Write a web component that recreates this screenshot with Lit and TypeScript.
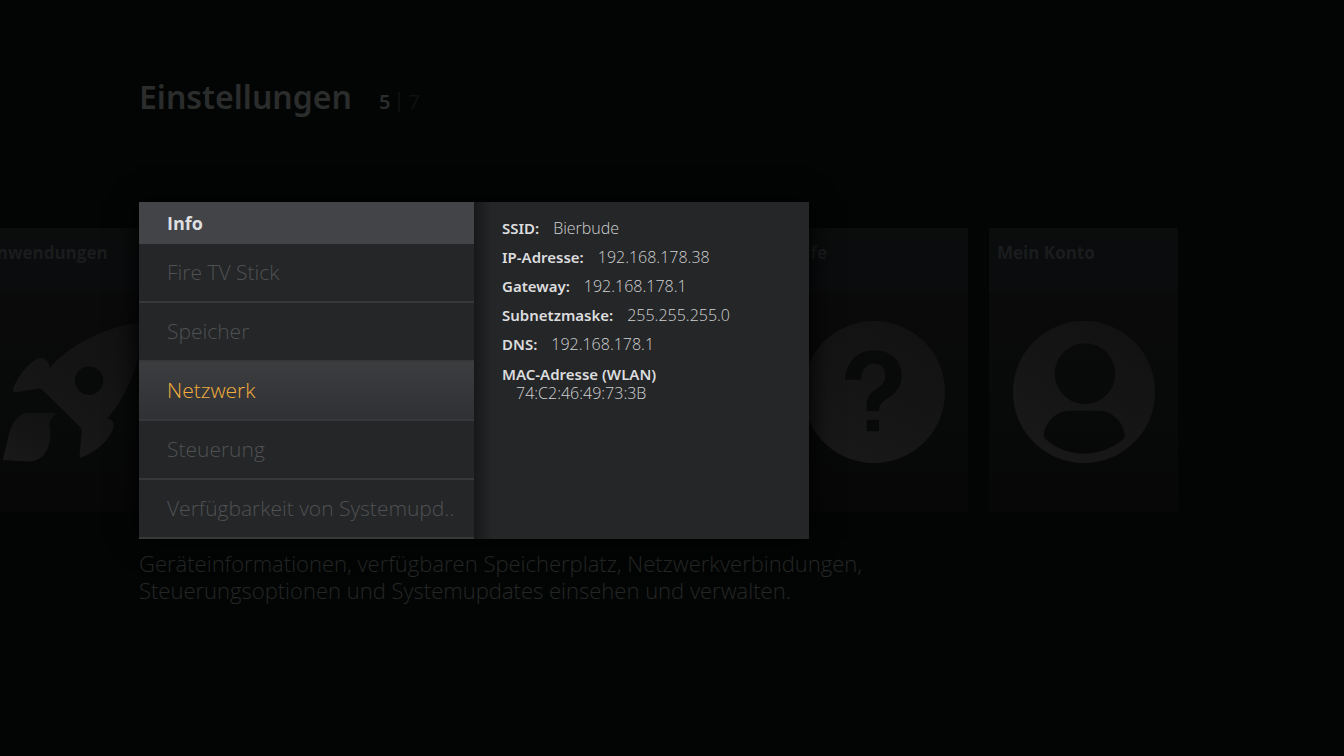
import { LitElement, html, css, svg } from "lit";
import { customElement, property, state } from "lit/decorators.js";
import { classMap } from "lit/directives/class-map.js";

const icons = {
  rocket: svg`
    <path fill-rule="evenodd" d="M146 142C196 80 304 18 424 4C424 102 388 214 318 294C334 292 342 306 336 324C322 360 286 392 242 409C236 411 235 408 236 402L242 330C242 322 238 318 234 314L128 210C122 204 118 202 110 203L48 213C36 214 34 208 38 198C52 166 80 128 108 114C130 104 144 120 146 142ZM264 136a43 43 0 1 0 .1 0Z"/>
    <path d="M5 418L24 340C36 292 58 274 92 275H156C166 275 164 280 156 288C146 298 144 306 146 318C154 360 138 420 88 421C58 422 40 418 5 418Z"/>`,
  help: svg`
    <path fill-rule="evenodd" d="M213 0a213 213 0 1 0 .1 0ZM126 176C130 122 164 88 212 88C264 88 296 118 296 164C296 196 280 216 254 232C236 244 228 252 228 270H191V250C191 226 204 214 224 200C240 189 247 180 247 164C247 142 234 128 212 128C190 128 176 146 175 176ZM191 296H228V331H191Z"/>`,
  account: svg`
    <path fill-rule="evenodd" d="M213 0a213 213 0 1 0 .1 0ZM216 67a91 91 0 1 1-.1 0ZM92 342C98 300 130 269 172 269H256C298 269 330 300 336 342C336 350 332 354 326 358C260 412 166 412 102 358C96 354 92 350 92 342Z"/>`,
};

@customElement("settings-tile")
class SettingsTile extends LitElement {
  @property() label = "";
  @property() icon: keyof typeof icons = "help";

  static styles = css`
    :host { display: block; flex: none; width: 189px; }
    .tile {
      display: flex; flex-direction: column; align-items: center;
      box-sizing: border-box; width: 100%; height: 284px;
      background: linear-gradient(#0b0c0c, #0a0c0e 62px, #0a0a0a 64px, #080909 180px, #070707);
      color: #1a1c1d; text-decoration: none;
    }
    .label {
      align-self: stretch; padding: 12px 8px 0; height: 81px;
      font-size: 17px; line-height: 26px; font-weight: 700; white-space: nowrap;
    }
    .icon { width: 142px; height: 142px; }
  `;

  render() {
    return html`<a class="tile" href="#">
      <span class="label">${this.label}</span>
      <svg class="icon" viewBox="0 0 426 426" aria-hidden="true">
        <defs>
          <linearGradient id="shade" x1="1" y1="0" x2="0.4" y2="1">
            <stop offset="0" stop-color="#111111" />
            <stop offset="1" stop-color="#181818" />
          </linearGradient>
        </defs>
        <g fill="url(#shade)">${icons[this.icon]}</g>
      </svg>
    </a>`;
  }
}

@customElement("app-root")
class AppRoot extends LitElement {
  @state() private selected = "Netzwerk";

  private entries = ["Fire TV Stick", "Speicher", "Netzwerk", "Steuerung", "Verfügbarkeit von Systemupd.."];

  private details = [
    ["SSID:", "Bierbude"],
    ["IP-Adresse:", "192.168.178.38"],
    ["Gateway:", "192.168.178.1"],
    ["Subnetzmaske:", "255.255.255.0"],
    ["DNS:", "192.168.178.1"],
  ];

  static styles = css`
    :host {
      display: block; min-height: 100vh; overflow: hidden;
      background: #030504;
      font-family: "Open Sans", "Noto Sans", sans-serif;
    }
    .title, .counter, .term { font-family: "Noto Sans", "Open Sans", sans-serif; }
    .header {
      display: flex; align-items: baseline; gap: 27px;
      padding: 76px 139px 0; height: 126px;
    }
    .title { margin: 0; font-size: 32px; line-height: 42px; font-weight: 600; color: #2b2c2c; }
    .counter { display: flex; align-items: center; gap: 8px; font-size: 20px; line-height: 24px; color: #0e1010; }
    .current { font-weight: 600; color: #2b2c2c; }
    .divider { width: 2px; height: 20px; background: #0d0f0f; }
    .stage { display: grid; align-items: start; }
    .tiles {
      grid-area: 1 / 1; display: flex; gap: 21px; min-width: 0;
      margin: 26px 0 0 -23px;
    }
    .slot { flex: none; width: 571px; }
    .dialog {
      grid-area: 1 / 1; z-index: 1; justify-self: start;
      display: grid; grid-template-columns: 335px 335px;
      margin-left: 139px; background: #252628;
      box-shadow: 0 0 24px 2px #000;
    }
    .heading {
      margin: 0; padding: 0 28px; background: #424448; color: #dedfe1;
      font-size: 18px; line-height: 42px; font-weight: 700;
    }
    .entry {
      display: block; box-sizing: border-box; width: 100%; height: 59px;
      margin: 0; padding: 0 0 2px 28px; border: 0; border-bottom: 2px solid #37383a;
      background: #242628; color: #505153;
      font: inherit; font-size: 21px; font-weight: 300; text-align: left; white-space: nowrap;
    }
    .entry.selected { background: linear-gradient(#3c3d3f, #303135); color: #f0ae3c; }
    .panel {
      padding: 12px 28px; background: linear-gradient(90deg, #17181a, #252628 18px);
      color: #d0d1d2; font-size: 16px;
    }
    .list { margin: 0; }
    .row { display: flex; gap: 14px; line-height: 29px; }
    .term { font-weight: 600; font-size: 15px; color: #dcddde; }
    .value { margin: 0; font-weight: 300; }
    .row.stacked { flex-direction: column; gap: 0; line-height: 19px; padding-top: 6px; }
    .stacked .value { padding-left: 14px; }
    .description {
      margin: 11px 139px 0; max-width: 760px;
      font-size: 22px; line-height: 27px; font-weight: 300; color: #252727;
    }
  `;

  render() {
    return html`
      <header class="header">
        <h1 class="title">Einstellungen</h1>
        <div class="counter"><span class="current">5</span><span class="divider"></span><span>7</span></div>
      </header>
      <main>
        <div class="stage">
          <div class="tiles">
            <settings-tile label="Anwendungen" icon="rocket"></settings-tile>
            <div class="slot"></div>
            <settings-tile label="Hilfe" icon="help"></settings-tile>
            <settings-tile label="Mein Konto" icon="account"></settings-tile>
          </div>
          <section class="dialog">
            <nav class="menu">
              <h2 class="heading">Info</h2>
              ${this.entries.map(
                (name) => html`<button
                  class=${classMap({ entry: true, selected: name === this.selected })}
                  @click=${() => (this.selected = name)}
                >${name}</button>`
              )}
            </nav>
            <div class="panel">
              <dl class="list">
                ${this.details.map(
                  ([term, value]) => html`<div class="row"><dt class="term">${term}</dt><dd class="value">${value}</dd></div>`
                )}
                <div class="row stacked"><dt class="term">MAC-Adresse (WLAN)</dt><dd class="value">74:C2:46:49:73:3B</dd></div>
              </dl>
            </div>
          </section>
        </div>
        <p class="description">
          Geräteinformationen, verfügbaren Speicherplatz, Netzwerkverbindungen, Steuerungsoptionen und Systemupdates einsehen und verwalten.
        </p>
      </main>
    `;
  }
}
